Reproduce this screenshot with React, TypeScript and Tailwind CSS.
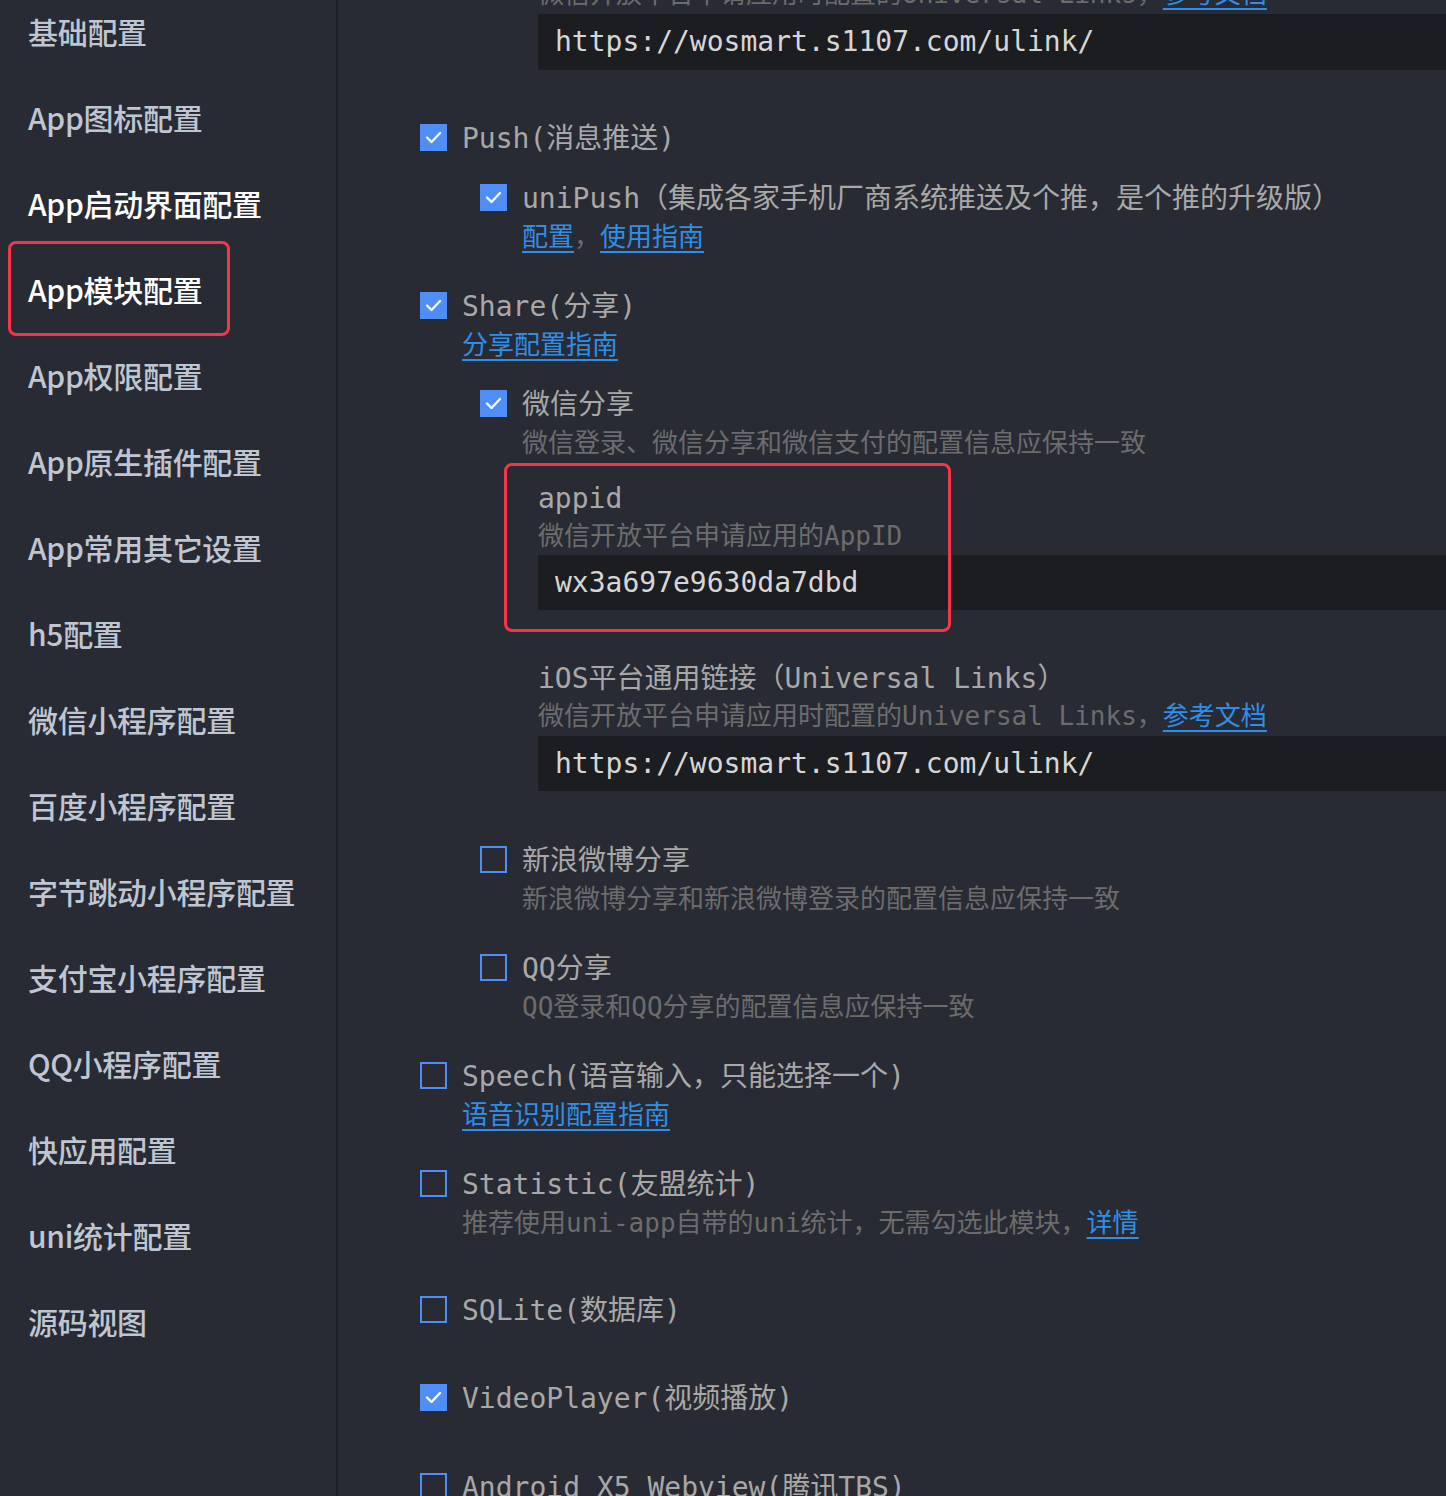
import React from "react";

const MONO = { fontFamily: '"DejaVu Sans Mono", "Noto Sans CJK SC", monospace' };
const SANS = { fontFamily: '"Noto Sans CJK SC", "Noto Sans", sans-serif' };

function Checkbox({ checked }: { checked: boolean }) {
  return (
    <div className="h-[40px] w-[27px] flex items-center shrink-0">
      {checked ? (
        <div className="w-[27px] h-[27px] bg-[#4f8ef7] flex items-center justify-center">
          <svg width="17" height="13" viewBox="0 0 17 13" fill="none">
            <path d="M2 6.5 L6.5 11 L15 2" stroke="white" strokeWidth="2.4" strokeLinecap="round" strokeLinejoin="round" />
          </svg>
        </div>
      ) : (
        <div className="w-[27px] h-[27px] border-2 border-[#4f8ef7]" />
      )}
    </div>
  );
}

function Link({ children }: { children: React.ReactNode }) {
  return <span className="text-[#2f8fe8] underline underline-offset-[5px] decoration-[2px]">{children}</span>;
}

function Desc({ children }: { children: React.ReactNode }) {
  return <div className="text-[26px] leading-[40px] text-[#6c6c6c] whitespace-nowrap">{children}</div>;
}

function Label({ children }: { children: React.ReactNode }) {
  return <div className="text-[28px] pt-[4px] leading-[36px] text-[#a8a8a8] whitespace-nowrap">{children}</div>;
}

function Field({ value }: { value: string }) {
  return (
    <div className="h-[56px] bg-[#1c1d21] flex items-center pl-[17px] text-[28px] text-[#d6d6d6] whitespace-nowrap">
      {value}
    </div>
  );
}

function Item({ checked, children, className = "" }: { checked: boolean; children: React.ReactNode; className?: string }) {
  return (
    <div className={"flex gap-[15px] " + className}>
      <Checkbox checked={checked} />
      <div className="flex-1 min-w-0">{children}</div>
    </div>
  );
}

const sideItems = [
  { t: "基础配置", c: "text-[#bfc6d1]" },
  { t: "App图标配置", c: "text-[#bfc6d1]" },
  { t: "App启动界面配置", c: "text-white" },
  { t: "App模块配置", c: "text-white", box: true },
  { t: "App权限配置", c: "text-[#bfc6d1]" },
  { t: "App原生插件配置", c: "text-[#bfc6d1]" },
  { t: "App常用其它设置", c: "text-[#bfc6d1]" },
  { t: "h5配置", c: "text-[#bfc6d1]" },
  { t: "微信小程序配置", c: "text-[#bfc6d1]" },
  { t: "百度小程序配置", c: "text-[#bfc6d1]" },
  { t: "字节跳动小程序配置", c: "text-[#bfc6d1]" },
  { t: "支付宝小程序配置", c: "text-[#bfc6d1]" },
  { t: "QQ小程序配置", c: "text-[#bfc6d1]" },
  { t: "快应用配置", c: "text-[#bfc6d1]" },
  { t: "uni统计配置", c: "text-[#bfc6d1]" },
  { t: "源码视图", c: "text-[#bfc6d1]" },
];

export default function App() {
  return (
    <div className="w-[1446px] h-[1496px] overflow-hidden bg-[#282b34] flex">
      {/* Sidebar */}
      <div className="w-[338px] shrink-0 h-full border-r-2 border-[#1d1f26] bg-[#282b34]" style={SANS}>
        <div className="mt-[-12px]">
          {sideItems.map((s) => (
            <div key={s.t} className="relative h-[86px] flex items-center pl-[28px]">
              <span className={"text-[30px] font-medium tracking-[-0.3px] " + s.c}>{s.t}</span>
              {s.box && (
                <div className="absolute left-[8px] top-[-5px] w-[222px] h-[95px] border-[3px] border-[#f7344a] rounded-[8px]" />
              )}
            </div>
          ))}
        </div>
      </div>

      {/* Main */}
      <div className="flex-1 min-w-0 pl-[82px]" style={MONO}>
        {/* cut-off top iOS links block */}
        <div className="ml-[118px] mt-[-26px]">
          <Desc>
            微信开放平台申请应用时配置的Universal Links，<Link>参考文档</Link>
          </Desc>
          <Field value="https://wosmart.s1107.com/ulink/" />
        </div>

        {/* Push */}
        <Item checked className="mt-[47px]">
          <Label>Push(消息推送)</Label>
        </Item>
        <div className="ml-[60px] mt-[20px]">
          <Item checked>
            <Label>uniPush（集成各家手机厂商系统推送及个推，是个推的升级版）</Label>
            <Desc>
              <Link>配置</Link>，<Link>使用指南</Link>
            </Desc>
          </Item>
        </div>

        {/* Share */}
        <Item checked className="mt-[28px]">
          <Label>Share(分享)</Label>
          <Desc>
            <Link>分享配置指南</Link>
          </Desc>
        </Item>
        <div className="ml-[60px] mt-[18px]">
          <Item checked>
            <Label>微信分享</Label>
            <Desc>微信登录、微信分享和微信支付的配置信息应保持一致</Desc>
            <div className="ml-[16px] mt-[14px] relative">
              <Label>appid</Label>
              <div className="text-[26px] leading-[38px] text-[#6c6c6c] whitespace-nowrap">微信开放平台申请应用的AppID</div>
              <div className="h-[55px] bg-[#1c1d21] flex items-center pl-[17px] text-[28px] text-[#d6d6d6]">
                wx3a697e9630da7dbd
              </div>
              <div className="absolute left-[-34px] top-[-14px] w-[447px] h-[169px] border-[3px] border-[#f7344a] rounded-[8px]" />
              <div className="mt-[47px]">
                <Label>iOS平台通用链接（Universal Links）</Label>
                <div className="text-[26px] leading-[39px] text-[#6c6c6c] whitespace-nowrap">
                  微信开放平台申请应用时配置的Universal Links，<Link>参考文档</Link>
                </div>
                <div className="h-[55px] bg-[#1c1d21] flex items-center pl-[17px] text-[28px] text-[#d6d6d6]">
                  https://wosmart.s1107.com/ulink/
                </div>
              </div>
            </div>
          </Item>
          <Item checked={false} className="mt-[48px]">
            <Label>新浪微博分享</Label>
            <Desc>新浪微博分享和新浪微博登录的配置信息应保持一致</Desc>
          </Item>
          <Item checked={false} className="mt-[28px]">
            <Label>QQ分享</Label>
            <Desc>QQ登录和QQ分享的配置信息应保持一致</Desc>
          </Item>
        </div>

        {/* Speech */}
        <Item checked={false} className="mt-[28px]">
          <Label>Speech(语音输入，只能选择一个)</Label>
          <Desc>
            <Link>语音识别配置指南</Link>
          </Desc>
        </Item>

        <Item checked={false} className="mt-[28px]">
          <Label>Statistic(友盟统计)</Label>
          <Desc>
            推荐使用uni-app自带的uni统计，无需勾选此模块，<Link>详情</Link>
          </Desc>
        </Item>

        <Item checked={false} className="mt-[46px]">
          <Label>SQLite(数据库)</Label>
        </Item>

        <Item checked className="mt-[48px]">
          <Label>VideoPlayer(视频播放)</Label>
        </Item>

        <Item checked={false} className="mt-[49px]">
          <Label>Android X5 Webview(腾讯TBS)</Label>
        </Item>
      </div>
    </div>
  );
}
